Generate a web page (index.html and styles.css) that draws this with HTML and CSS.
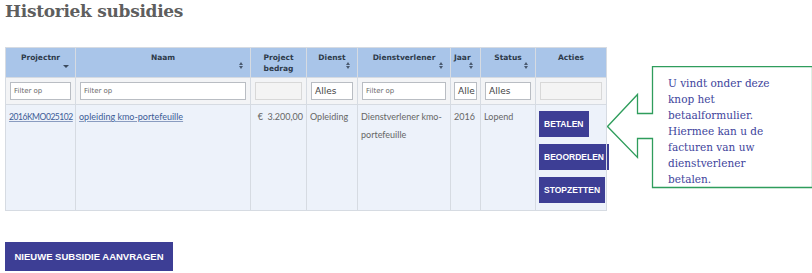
FILE: index.html
```html
<!DOCTYPE html>
<html>

<head>
    <title>Historiek subsidies</title>
    <link rel="stylesheet" href="styles.css">
</head>

<body>
    <h1 class="title">Historiek subsidies</h1>

    <div class="wrap">
        <table class="grid">
            <colgroup>
                <col style="width: 70px">
                <col style="width: 175px">
                <col style="width: 56px">
                <col style="width: 51px">
                <col style="width: 93px">
                <col style="width: 30px">
                <col style="width: 55px">
                <col style="width: 71px">
            </colgroup>
            <tr class="head">
                <th>Projectnr <span class="sort down"></span></th>
                <th>Naam <span class="sort both"></span></th>
                <th>Project<br>bedrag</th>
                <th>Dienst <span class="sort both"></span></th>
                <th>Dienstverlener <span class="sort both"></span></th>
                <th class="tight">Jaar <span class="sort both"></span></th>
                <th>Status <span class="sort both"></span></th>
                <th>Acties</th>
            </tr>
            <tr class="filter">
                <td><div class="box">Filter op</div></td>
                <td><div class="box">Filter op</div></td>
                <td><div class="box off"></div></td>
                <td><div class="box sel">Alles</div></td>
                <td><div class="box">Filter op</div></td>
                <td class="tight"><div class="box sel">Alle</div></td>
                <td><div class="box sel">Alles</div></td>
                <td><div class="box off"></div></td>
            </tr>
            <tr class="row">
                <td class="code"><a href="#">2016KMO025102</a></td>
                <td><a href="#">opleiding kmo-portefeuille</a></td>
                <td class="amount">€&nbsp; 3.200,00</td>
                <td>Opleiding</td>
                <td>Dienstverlener kmo-portefeuille</td>
                <td>2016</td>
                <td>Lopend</td>
                <td class="acts">
                    <button class="btn">BETALEN</button>
                    <button class="btn">BEOORDELEN</button>
                    <button class="btn">STOPZETTEN</button>
                </td>
            </tr>
        </table>

        <!-- callout next to the Betalen button -->
        <div class="callout">
            <svg class="arrow" width="210" height="126" viewBox="0 0 210 126">
                <path d="M45.5 0.5 H205.5 V121.5 H45.5 V72.5 H30.5 V91.5 L0.5 60.5 L30.5 28.5 V47.5 H45.5 Z"
                    fill="#fff" stroke="#2f9d5c" stroke-width="1.3" />
            </svg>
            <p>U vindt onder deze knop het betaalformulier. Hiermee kan u de facturen van uw dienstverlener betalen.</p>
        </div>
    </div>

    <button class="btn big">NIEUWE SUBSIDIE AANVRAGEN</button>
</body>

</html>
```

FILE: styles.css
```css
body {
    margin: 0;
    padding: 0 5px;
    background: #fff;
    font-family: "DejaVu Sans", sans-serif;
}

.title {
    margin: 1px 0 0 0;
    font-family: "DejaVu Serif", serif;
    font-size: 17px;
    font-weight: bold;
    color: #5e5e5e;
    letter-spacing: -0.3px;
    height: 46px;
}

.wrap {
    position: relative;
}

.grid {
    border-collapse: collapse;
    table-layout: fixed;
    width: 602px;
}

.grid th,
.grid td {
    border: 1px solid #d6dbe2;
    padding: 0 4px;
}

.head {
    height: 30px;
}

.head th {
    background: #a9c5e9;
    vertical-align: top;
    padding-top: 4px;
    font-size: 7.5px;
    color: #2d3a4a;
    font-weight: bold;
    line-height: 11px;
    position: relative;
}

.head th.tight,
.filter td.tight {
    padding-left: 3px;
    padding-right: 3px;
}

.head th.tight {
    text-align: left;
}

.sort {
    position: absolute;
    right: 6px;
    top: 14px;
    width: 6px;
    height: 7px;
}

.sort.down::after {
    content: '';
    position: absolute;
    left: 0;
    top: 3px;
    border-left: 3px solid transparent;
    border-right: 3px solid transparent;
    border-top: 3px solid #3b4a5e;
}

.sort.both::before,
.sort.both::after {
    content: '';
    position: absolute;
    left: 1px;
    border-left: 2px solid transparent;
    border-right: 2px solid transparent;
}

.sort.both::before {
    top: 0;
    border-bottom: 3px solid #4a5a70;
}

.sort.both::after {
    top: 4px;
    border-top: 3px solid #4a5a70;
}

.filter {
    height: 27px;
}

.filter td {
    background: #f3f4f6;
}

.box {
    height: 18px;
    background: #fff;
    border: 1px solid #b9bdc3;
    font-size: 7px;
    color: #6a6a6a;
    line-height: 17px;
    padding-left: 3px;
    box-sizing: border-box;
    white-space: nowrap;
    overflow: hidden;
}

.box.sel {
    font-size: 9px;
    color: #444;
}

.box.off {
    background: #f4f4f4;
    border-color: #d8d8d8;
}

.row {
    height: 106px;
}

.row td {
    background: #edf2fa;
    vertical-align: top;
    padding: 3px 2px 0 3px;
    font-family: "Lato", sans-serif;
    font-size: 9px;
    line-height: 18px;
    color: #666;
}

.row td.code {
    font-size: 8.5px;
    letter-spacing: -0.45px;
    white-space: nowrap;
}

.row a {
    color: #3c5b97;
    text-decoration: underline;
    text-decoration-color: #8a9cc0;
}

.row td.amount {
    text-align: right;
    white-space: nowrap;
    padding-right: 3px;
}

.row td.acts {
    padding: 6px 0 0 3px;
    line-height: normal;
}

.btn {
    display: block;
    background: #3d3e95;
    color: #fff;
    border: none;
    font-family: "Liberation Sans", sans-serif;
    font-weight: bold;
    font-size: 8.5px;
    padding: 0 5px;
    height: 26px;
    margin-bottom: 7px;
}

.btn.big {
    margin-top: 31px;
    height: 29px;
    width: 168px;
    font-size: 9.5px;
    padding: 0;
}

.callout {
    position: absolute;
    left: 602px;
    top: 19px;
    width: 210px;
    height: 126px;
}

.arrow {
    position: absolute;
    left: 0;
    top: 0;
}

.callout p {
    position: relative;
    margin: 0;
    width: 122px;
    padding: 9px 0 0 61px;
    font-family: "DejaVu Serif", serif;
    font-size: 10.5px;
    line-height: 16px;
    color: #3e449c;
}
```
